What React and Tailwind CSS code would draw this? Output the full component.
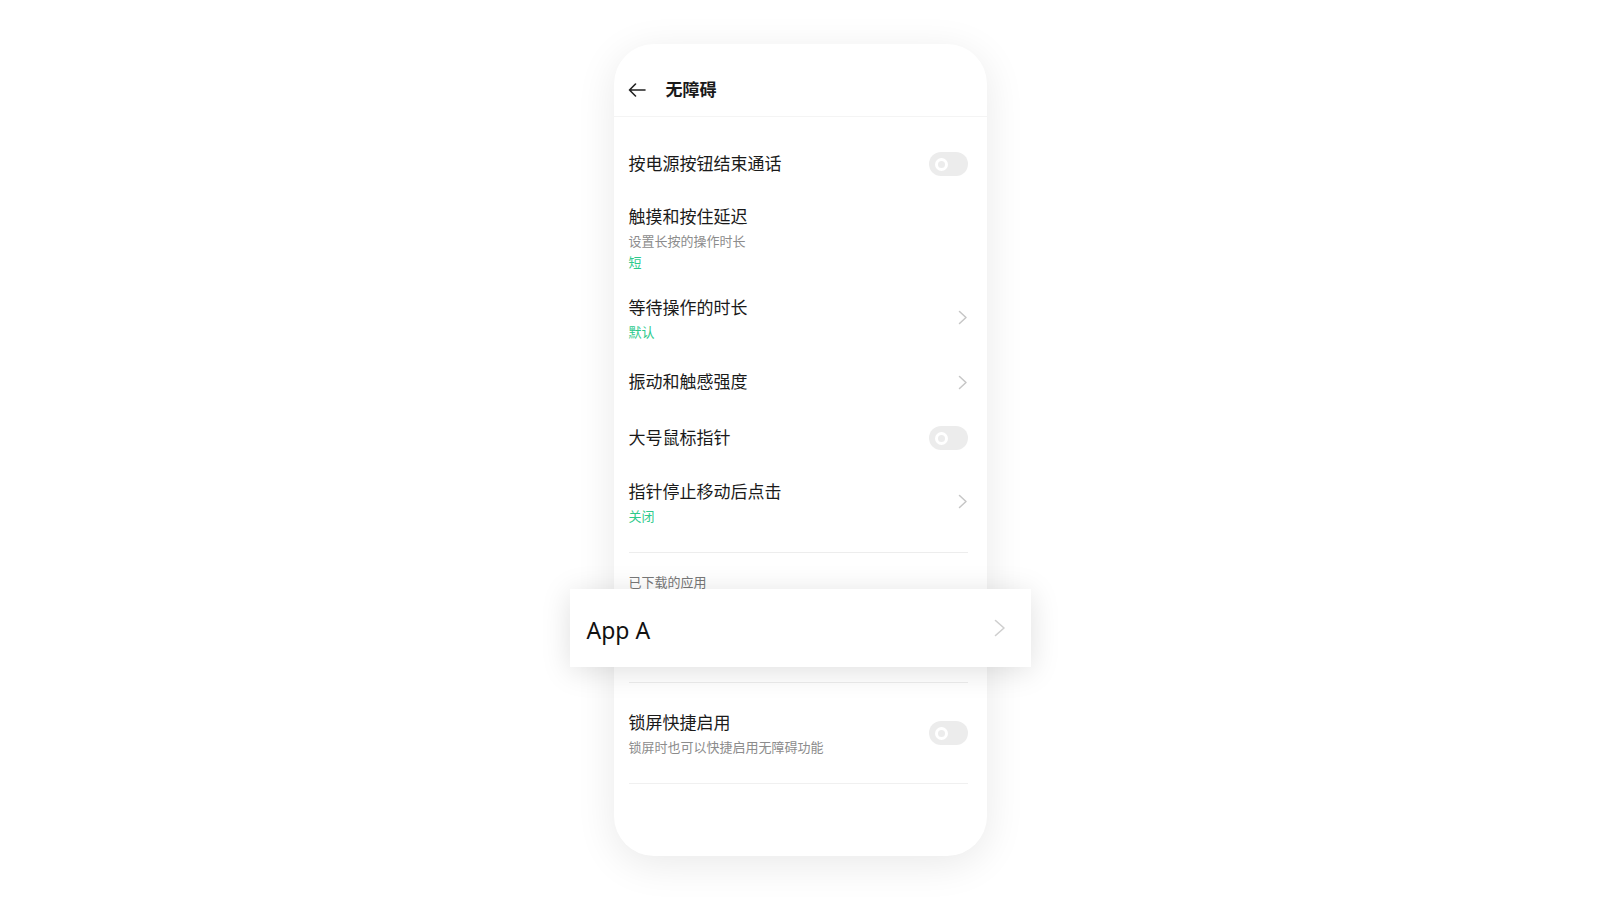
import React from "react";

const font = { fontFamily: '"Noto Sans", "Noto Sans CJK SC", sans-serif' };

const Chevron = ({ big, raised }) =>
  big ? (
    <svg width="12" height="18" viewBox="0 0 12 18" fill="none">
      <path d="M1.5 1.5 L10 9 L1.5 16.5" stroke="#cfcfcf" strokeWidth="1.6" strokeLinecap="round" strokeLinejoin="round" />
    </svg>
  ) : (
    <svg className={raised ? "-mt-[6px]" : ""} width="10" height="15" viewBox="0 0 10 15" fill="none">
      <path d="M1.5 1.5 L8 7.5 L1.5 13.5" stroke="#c6c6c6" strokeWidth="1.5" strokeLinecap="round" strokeLinejoin="round" />
    </svg>
  );

const Toggle = ({ raised }) => (
  <div className={`w-[39px] h-[24px] rounded-full bg-[#ececec] flex items-center pl-[6px] ${raised ? "-mt-[4px]" : ""}`}>
    <div className="w-[13px] h-[13px] rounded-full border-[3px] border-white" />
  </div>
);

const Title = ({ children }) => (
  <div className="text-[17px] leading-[24px] text-[#1a1a1a]">{children}</div>
);

const Sub = ({ children }) => (
  <div className="text-[13px] leading-[24px] text-[#8c8c8c]">{children}</div>
);

const Value = ({ children, tight }) => (
  <div className={`text-[13px] text-[#2dca8c] ${tight ? "leading-[18px]" : "leading-[24px]"}`}>{children}</div>
);

export default function App() {
  return (
    <div className="min-h-screen bg-white pt-[44px]" style={font}>
      <div className="mx-auto w-[373px] h-[812px] rounded-[40px] bg-white shadow-[0_8px_40px_rgba(0,0,0,0.09)] flex flex-col">
        {/* header */}
        <div className="h-[73px] pt-[20px] pl-[14px] flex items-center border-b border-[#f4f4f4]">
          <svg width="18" height="14" viewBox="0 0 18 14" fill="none">
            <path d="M17 7 H1.5 M7.5 1 L1.5 7 L7.5 13" stroke="#222" strokeWidth="1.6" strokeLinecap="round" strokeLinejoin="round" />
          </svg>
          <div className="ml-[20px] text-[17px] font-semibold text-[#1a1a1a]">无障碍</div>
        </div>

        <div className="pl-[15px] pr-[19px] flex flex-col">
          <div className="mt-[23px] h-[48px] flex items-center justify-between">
            <Title>按电源按钮结束通话</Title>
            <Toggle />
          </div>

          <div className="mt-[17px]">
            <Title>触摸和按住延迟</Title>
            <Sub>设置长按的操作时长</Sub>
            <Value tight>短</Value>
          </div>

          <div className="mt-[25px] flex items-center justify-between">
            <div>
              <Title>等待操作的时长</Title>
              <Value>默认</Value>
            </div>
            <Chevron raised />
          </div>

          <div className="mt-[26px] flex items-center justify-between">
            <Title>振动和触感强度</Title>
            <Chevron />
          </div>

          <div className="mt-[32px] flex items-center justify-between">
            <Title>大号鼠标指针</Title>
            <Toggle />
          </div>

          <div className="mt-[30px] flex items-center justify-between">
            <div>
              <Title>指针停止移动后点击</Title>
              <Value>关闭</Value>
            </div>
            <Chevron raised />
          </div>

          <div className="mt-[24px] h-px bg-[#ededed]" />

          <div className="mt-[20px] text-[13px] leading-[18px] text-[#777]">已下载的应用</div>

          <div className="relative -mt-[2px] -ml-[59px] -mr-[63px] h-[78px] bg-white shadow-[0_4px_30px_rgba(0,0,0,0.13)] flex items-center justify-between pl-[17px] pr-[25px]">
            <div className="pt-[4px] text-[23px] text-[#111]">App A</div>
            <Chevron big />
          </div>

          <div className="mt-[15px] h-px bg-[#ededed]" />

          <div className="mt-[28px] flex items-center justify-between">
            <div>
              <Title>锁屏快捷启用</Title>
              <Sub>锁屏时也可以快捷启用无障碍功能</Sub>
            </div>
            <Toggle raised />
          </div>

          <div className="mt-[24px] h-px bg-[#f0f0f0]" />
        </div>
      </div>
    </div>
  );
}
